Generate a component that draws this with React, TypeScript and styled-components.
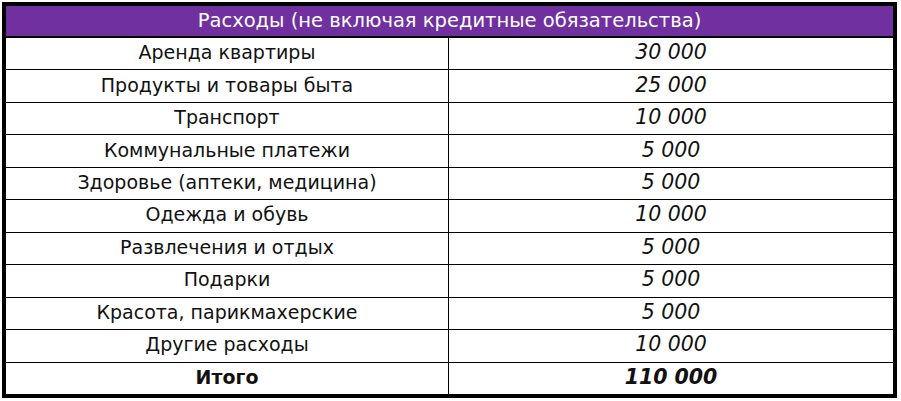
import styled, { createGlobalStyle } from 'styled-components';

const GlobalStyle = createGlobalStyle`
  html, body {
    margin: 0;
    padding: 0;
    background: #ffffff;
  }
`;

const rows = [
  { name: 'Аренда квартиры', sum: '30 000' },
  { name: 'Продукты и товары быта', sum: '25 000' },
  { name: 'Транспорт', sum: '10 000' },
  { name: 'Коммунальные платежи', sum: '5 000' },
  { name: 'Здоровье (аптеки, медицина)', sum: '5 000' },
  { name: 'Одежда и обувь', sum: '10 000' },
  { name: 'Развлечения и отдых', sum: '5 000' },
  { name: 'Подарки', sum: '5 000' },
  { name: 'Красота, парикмахерские', sum: '5 000' },
  { name: 'Другие расходы', sum: '10 000' },
];

const Page = styled.div`
  padding: 2px;
`;

const Table = styled.div`
  box-sizing: border-box;
  width: 895px;
  height: 396px;
  border: 4px solid #000;
  display: grid;
  grid-template-columns: 443px 1fr;
  grid-template-rows: 31px repeat(11, 1fr);
  font-family: 'DejaVu Sans', 'Noto Sans', sans-serif;
  color: #111;
`;

const Header = styled.div`
  grid-column: 1 / 3;
  background: #7030a0;
  color: #fff;
  font-size: 19.5px;
  display: flex;
  align-items: center;
  justify-content: center;
  border-bottom: 1px solid #000;
  box-sizing: border-box;
  padding-bottom: 2px;
`;

const Cell = styled.div<{ $total?: boolean }>`
  display: flex;
  align-items: center;
  justify-content: center;
  border-top: 1px solid #000;
  padding-bottom: 3px;
  font-size: 19px;
  font-weight: ${(p) => (p.$total ? 600 : 400)};
`;

const NameCell = styled(Cell)`
  border-right: 1px solid #000;
`;

const SumCell = styled(Cell)`
  font-style: italic;
  font-size: 20.5px;
`;

export default function App() {
  return (
    <Page>
      <GlobalStyle />
      <Table>
        <Header>Расходы (не включая кредитные обязательства)</Header>
        {rows.map((r) => (
          <Row key={r.name} name={r.name} sum={r.sum} />
        ))}
        <Row name="Итого" sum="110 000" total />
      </Table>
    </Page>
  );
}

function Row({ name, sum, total }: { name: string; sum: string; total?: boolean }) {
  return (
    <>
      <NameCell $total={total}>{name}</NameCell>
      <SumCell $total={total}>{sum}</SumCell>
    </>
  );
}
